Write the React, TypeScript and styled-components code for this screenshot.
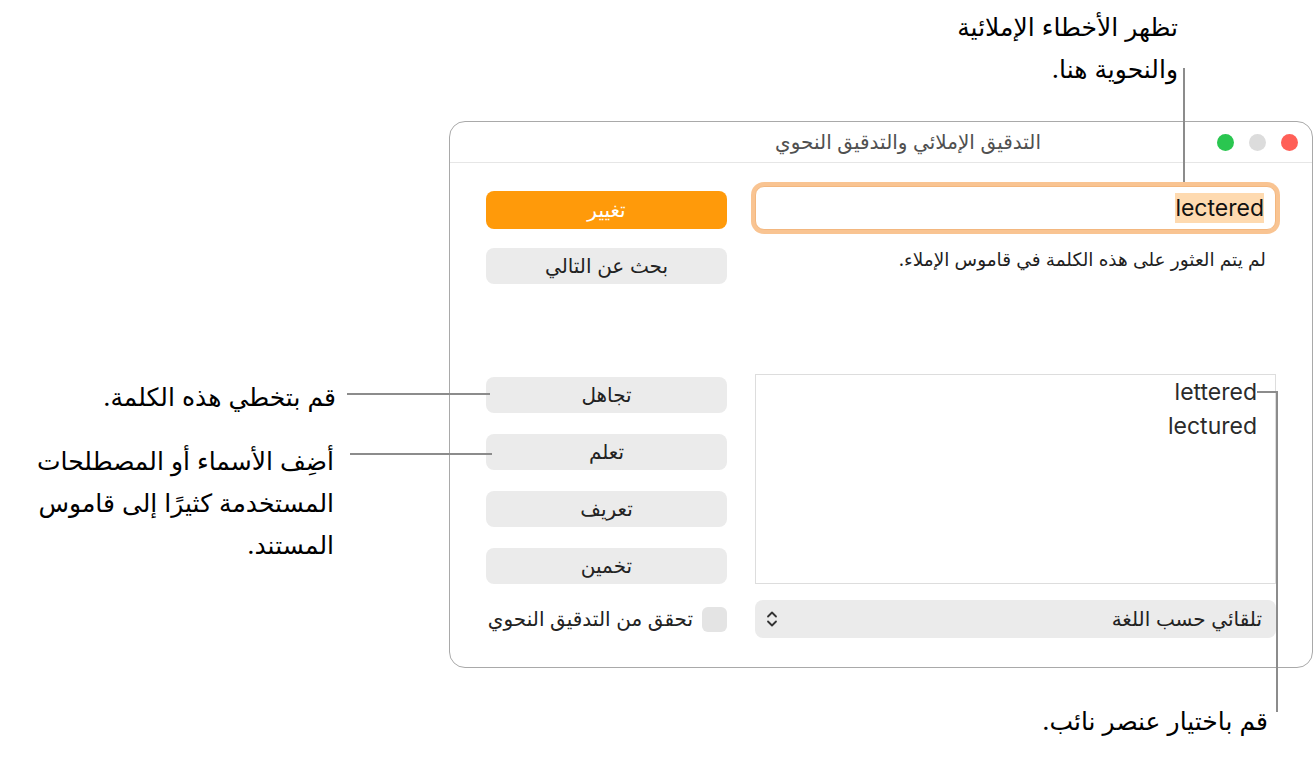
import React from 'react';
import styled, { createGlobalStyle } from 'styled-components';

const GlobalStyle = createGlobalStyle`
  html, body {
    margin: 0;
    padding: 0;
    background: #ffffff;
  }
  body {
    font-family: Inter, "DejaVu Sans", sans-serif;
    color: #1d1d1f;
  }
`;

const lineColor = '#8c8c8c';

const Stage = styled.div`
  position: relative;
  width: 1316px;
  height: 769px;
  overflow: hidden;
  padding: 121px 0 0 449px;
  box-sizing: border-box;
`;

const Window = styled.div`
  width: 864px;
  height: 547px;
  box-sizing: border-box;
  border: 1px solid #a9a9a9;
  border-radius: 16px;
  background: #ffffff;
  display: flex;
  flex-direction: column;
  direction: rtl;
`;

const TitleBar = styled.div`
  height: 40px;
  flex: none;
  display: flex;
  align-items: center;
  padding-right: 14px;
  border-bottom: 1px solid #e6e6e6;
`;

const Lights = styled.div`
  display: flex;
  gap: 15px;
`;

const Light = styled.span<{ color: string }>`
  width: 17px;
  height: 17px;
  border-radius: 50%;
  background: ${props => props.color};
`;

const Title = styled.div`
  margin-right: 176px;
  font-size: 20px;
  color: #505050;
`;

const Body = styled.div`
  flex: 1;
  display: grid;
  grid-template-columns: 521px 241px;
  grid-template-rows: 211px 210px 54px;
  column-gap: 28px;
  padding: 0 36px;
`;

const FieldColumn = styled.div`
  display: flex;
  flex-direction: column;
  padding-top: 23px;
`;

const Field = styled.div`
  height: 44px;
  box-sizing: border-box;
  border-radius: 9px;
  border: 1px solid #f3b77f;
  box-shadow: 0 0 0 4px #f9c492;
  background: #ffffff;
  display: flex;
  align-items: center;
  padding-right: 11px;
  font-size: 23px;
  color: #111;
`;

const Selected = styled.span`
  background: #fedab0;
  padding: 1px 0;
  direction: ltr;
`;

const Message = styled.div`
  margin-top: 18px;
  padding-right: 10px;
  font-size: 18.5px;
  color: #1f1f1f;
`;

const ButtonStack = styled.div<{ gap: number; top?: number; end?: boolean }>`
  display: flex;
  flex-direction: column;
  gap: ${props => props.gap}px;
  padding-top: ${props => props.top || 0}px;
  justify-content: ${props => (props.end ? 'flex-end' : 'flex-start')};
`;

const Button = styled.div<{ primary?: boolean; tall?: boolean }>`
  height: ${props => (props.tall ? 38 : 36)}px;
  border-radius: 8px;
  display: flex;
  align-items: center;
  justify-content: center;
  font-size: 20px;
  background: ${props => (props.primary ? '#ff9a0a' : '#ebebeb')};
  color: ${props => (props.primary ? '#ffffff' : '#222222')};
  font-weight: ${props => (props.primary ? 500 : 400)};
`;

const List = styled.div`
  border: 1px solid #dddddd;
  background: #ffffff;
  padding: 0 18px 0 0;
  display: flex;
  flex-direction: column;
  align-items: flex-start;
`;

const ListItem = styled.div`
  font-size: 23px;
  line-height: 34px;
  color: #2b2b2b;
  direction: ltr;
`;

const Popup = styled.div`
  align-self: end;
  height: 38px;
  border-radius: 8px;
  background: #ebebeb;
  display: flex;
  align-items: center;
  justify-content: space-between;
  padding: 0 14px 0 11px;
  font-size: 20px;
  color: #222;
`;

const CheckRow = styled.label`
  align-self: end;
  height: 38px;
  display: flex;
  align-items: center;
  gap: 9px;
  font-size: 20px;
  color: #222;
`;

const CheckBox = styled.span`
  width: 25px;
  height: 25px;
  border-radius: 6px;
  background: #e4e4e4;
  flex: none;
`;

const Callout = styled.div<{ right: number; top: number }>`
  position: absolute;
  right: ${props => 1316 - props.right}px;
  top: ${props => props.top}px;
  direction: rtl;
  text-align: right;
  font-size: 25px;
  line-height: 42px;
  color: #000;
  white-space: nowrap;
`;

const HLine = styled.div`
  position: absolute;
  height: 2px;
  background: ${lineColor};
`;

const VLine = styled.div`
  position: absolute;
  width: 2px;
  background: ${lineColor};
`;

const Chevrons = () => (
  <svg width="12" height="18" viewBox="0 0 12 18" fill="none" stroke="#333" strokeWidth="1.8" strokeLinecap="round" strokeLinejoin="round">
    <path d="M2 6.5 L6 2.5 L10 6.5" />
    <path d="M2 11.5 L6 15.5 L10 11.5" />
  </svg>
);

const App: React.FC = () => {
  return (
    <Stage>
      <GlobalStyle />
      <Window>
        <TitleBar>
          <Lights>
            <Light color="#ff5f57" />
            <Light color="#dcdcdc" />
            <Light color="#2ac650" />
          </Lights>
          <Title>التدقيق الإملائي والتدقيق النحوي</Title>
        </TitleBar>
        <Body>
          <FieldColumn>
            <Field>
              <Selected>lectered</Selected>
            </Field>
            <Message>لم يتم العثور على هذه الكلمة في قاموس الإملاء.</Message>
          </FieldColumn>
          <ButtonStack gap={19} top={28}>
            <Button primary tall>تغيير</Button>
            <Button>بحث عن التالي</Button>
          </ButtonStack>
          <List>
            <ListItem>lettered</ListItem>
            <ListItem>lectured</ListItem>
          </List>
          <ButtonStack gap={21} end>
            <Button>تجاهل</Button>
            <Button>تعلم</Button>
            <Button>تعريف</Button>
            <Button>تخمين</Button>
          </ButtonStack>
          <Popup>
            <span>تلقائي حسب اللغة</span>
            <Chevrons />
          </Popup>
          <CheckRow>
            <CheckBox />
            <span>تحقق من التدقيق النحوي</span>
          </CheckRow>
        </Body>
      </Window>

      <Callout right={1178} top={6}>
        تظهر الأخطاء الإملائية
        <br />
        والنحوية هنا.
      </Callout>
      <VLine style={{ left: 1183, top: 68, height: 114 }} />

      <Callout right={336} top={376}>قم بتخطي هذه الكلمة.</Callout>
      <HLine style={{ left: 347, top: 393, width: 143 }} />

      <Callout right={334} top={440}>
        أضِف الأسماء أو المصطلحات
        <br />
        المستخدمة كثيرًا إلى قاموس
        <br />
        المستند.
      </Callout>
      <HLine style={{ left: 350, top: 453, width: 142 }} />

      <HLine style={{ left: 1257, top: 391, width: 21 }} />
      <VLine style={{ left: 1276, top: 391, height: 321 }} />
      <Callout right={1268} top={700}>قم باختيار عنصر نائب.</Callout>
    </Stage>
  );
};

export default App;
